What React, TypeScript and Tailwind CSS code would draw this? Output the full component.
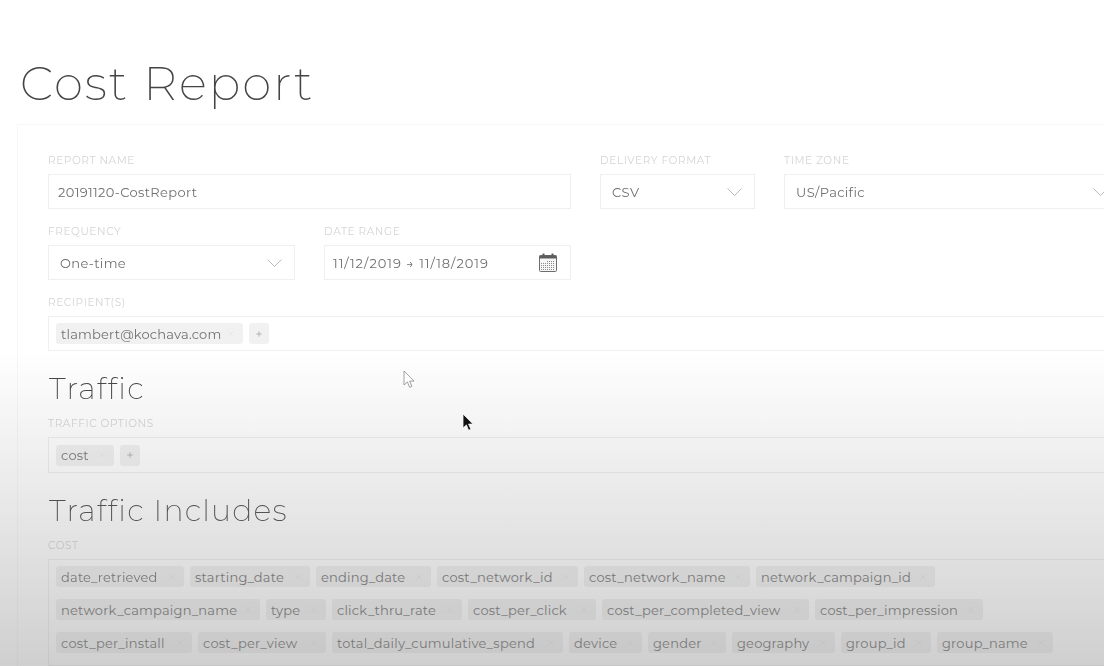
import { X, Plus } from "lucide-react";

const font = "font-['Montserrat','Lato','Open_Sans',sans-serif]";

const rowOne = [
  { name: "date_retrieved", w: "w-[128px]" },
  { name: "starting_date", w: "w-[120px]" },
  { name: "ending_date", w: "w-[115px]" },
  { name: "cost_network_id", w: "w-[141px]" },
  { name: "cost_network_name", w: "w-[166px]" },
  { name: "network_campaign_id", w: "w-[179px]" },
];
const rowTwo = [
  { name: "network_campaign_name", w: "w-[204px]" },
  { name: "type", w: "w-[60px]" },
  { name: "click_thru_rate", w: "w-[130px]" },
  { name: "cost_per_click", w: "w-[128px]" },
  { name: "cost_per_completed_view", w: "w-[207px]" },
  { name: "cost_per_impression", w: "w-[168px]" },
];
const rowThree = [
  { name: "cost_per_install", w: "w-[136px]" },
  { name: "cost_per_view", w: "w-[128px]" },
  { name: "total_daily_cumulative_spend", w: "w-[231px]" },
  { name: "device", w: "w-[73px]" },
  { name: "gender", w: "w-[78px]" },
  { name: "geography", w: "w-[103px]" },
  { name: "group_id", w: "w-[90px]" },
  { name: "group_name", w: "w-[116px]" },
];

function Label({ children }: { children: string }) {
  return <div className="h-[14px] text-[10.5px] leading-[14px] text-[#d4d4d4] tracking-[0.6px]">{children}</div>;
}

function Tag({ name, w }: { name: string; w: string }) {
  return (
    <span className={`${w} h-[21px] shrink-0 flex items-center justify-between pl-[5px] pr-[7px] rounded-[3px] bg-[#f1f1f1] text-[13px] text-[#707070] tracking-[0.2px]`}>
      <span className="whitespace-nowrap pt-[2px]">{name}</span>
      <X size={10} strokeWidth={1.2} className="text-[#dedede]" />
    </span>
  );
}

function AddTag() {
  return (
    <span className="w-[20px] h-[21px] shrink-0 grid place-items-center rounded-[3px] bg-[#f1f1f1] text-[#9a9a9a]">
      <Plus size={8} strokeWidth={2} />
    </span>
  );
}

function Chevron() {
  return (
    <svg width="15" height="8" viewBox="0 0 15 8" fill="none">
      <path d="M.5.5l7 7 7-7" stroke="#a8a8a8" strokeWidth="0.8" />
    </svg>
  );
}

function Select({ value, w }: { value: string; w: string }) {
  return (
    <div className={`${w} h-[35px] shrink-0 flex items-center justify-between pl-[11px] pr-[12px] border border-[#efefef] text-[13px] text-[#707070] tracking-[0.35px]`}>
      <span className="pt-[2px]">{value}</span>
      <Chevron />
    </div>
  );
}

function CalendarIcon() {
  return (
    <svg width="18" height="19" viewBox="0 0 18 19" fill="none">
      <rect x="0.5" y="2.5" width="17" height="16" rx="1" stroke="#6d6d6d" strokeWidth="1" fill="#f6f6f6" />
      <rect x="0.5" y="2.5" width="17" height="3" fill="#5e5e5e" />
      <rect x="3.5" y="0.5" width="2" height="3" fill="#5e5e5e" />
      <rect x="12.5" y="0.5" width="2" height="3" fill="#5e5e5e" />
      <path d="M8 8.5h8M2 10.5h14M2 12.5h14M2 14.5h14M2 16.5h14" stroke="#8a8a8a" strokeWidth="1" strokeDasharray="1 1" />
    </svg>
  );
}

function Cursor({ className, fill, stroke }: { className: string; fill: string; stroke: string }) {
  return (
    <svg width="12" height="19" viewBox="0 0 12 19" className={className}>
      <path d="M1 1v14l3.4-3.1 2.2 5.4 2.3-1-2.3-5.2H11z" fill={fill} stroke={stroke} strokeWidth="0.8" strokeLinejoin="round" />
    </svg>
  );
}

export default function App() {
  return (
    <div className={`relative w-[1104px] h-[666px] overflow-hidden bg-white ${font}`}>
      <div className="blur-[0.4px]">
        <div className="pl-[20px] pt-[54px] h-[124px]">
          <h1 className="text-[47px] leading-[60px] font-extralight text-[#444444] tracking-[2px]">Cost Report</h1>
        </div>

        <div className="ml-[17px] w-[1200px] border-t border-l border-[#f7f7f7] pl-[30px] pt-[29px]">
          <div className="flex gap-[29px]">
            <div className="w-[523px] shrink-0">
              <Label>REPORT NAME</Label>
              <div className="mt-[6px] h-[35px] flex items-center pl-[9px] pt-[2px] border border-[#efefef] text-[13px] text-[#707070] tracking-[0.35px]">20191120-CostReport</div>
            </div>
            <div className="shrink-0">
              <Label>DELIVERY FORMAT</Label>
              <div className="mt-[6px]"><Select value="CSV" w="w-[155px]" /></div>
            </div>
            <div className="shrink-0">
              <Label>TIME ZONE</Label>
              <div className="mt-[6px]"><Select value="US/Pacific" w="w-[337px]" /></div>
            </div>
          </div>

          <div className="mt-[16px] flex gap-[29px]">
            <div className="shrink-0">
              <Label>FREQUENCY</Label>
              <div className="mt-[6px]"><Select value="One-time" w="w-[247px]" /></div>
            </div>
            <div className="shrink-0">
              <Label>DATE RANGE</Label>
              <div className="mt-[6px] w-[247px] h-[35px] flex items-center justify-between pl-[8px] pr-[13px] border border-[#efefef] text-[13px] text-[#707070] tracking-[0.95px]">
                <span className="pt-[2px]">11/12/2019 → 11/18/2019</span>
                <CalendarIcon />
              </div>
            </div>
          </div>

          <div className="mt-[16px]">
            <Label>RECIPIENT(S)</Label>
            <div className="mt-[6px] h-[35px] flex items-center gap-[6px] pl-[7px] border border-[#efefef]">
              <Tag name="tlambert@kochava.com" w="w-[187px]" />
              <AddTag />
            </div>
          </div>

          <h2 className="mt-[20px] ml-[1px] h-[36px] text-[30px] leading-[36px] font-extralight text-[#444444] tracking-[1.2px]">Traffic</h2>
          <div className="mt-[10px]"><Label>TRAFFIC OPTIONS</Label></div>
          <div className="mt-[6px] h-[36px] flex items-center gap-[6px] pl-[7px] border border-[#efefef]">
            <Tag name="cost" w="w-[58px]" />
            <AddTag />
          </div>

          <h2 className="mt-[20px] ml-[1px] h-[36px] text-[30px] leading-[36px] font-extralight text-[#444444] tracking-[1.2px]">Traffic Includes</h2>
          <div className="mt-[10px]"><Label>COST</Label></div>
          <div className="mt-[6px] border border-[#efefef] pl-[7px] pt-[6px] pb-[12px] flex flex-col gap-[12px]">
            <div className="flex gap-[6px]">{rowOne.map((t) => <Tag key={t.name} {...t} />)}</div>
            <div className="flex gap-[6px]">{rowTwo.map((t) => <Tag key={t.name} {...t} />)}</div>
            <div className="flex gap-[6px]">{rowThree.map((t) => <Tag key={t.name} {...t} />)}</div>
          </div>
        </div>
      </div>

      <div className="pointer-events-none absolute left-0 right-0 top-[350px] bottom-0 bg-gradient-to-b from-[#888888]/0 to-[#888888]/40" />

      <Cursor className="absolute left-[403px] top-[370px]" fill="#ffffff" stroke="#8a8a8a" />
      <Cursor className="absolute left-[462px] top-[413px]" fill="#111111" stroke="#f5f5f5" />
    </div>
  );
}
